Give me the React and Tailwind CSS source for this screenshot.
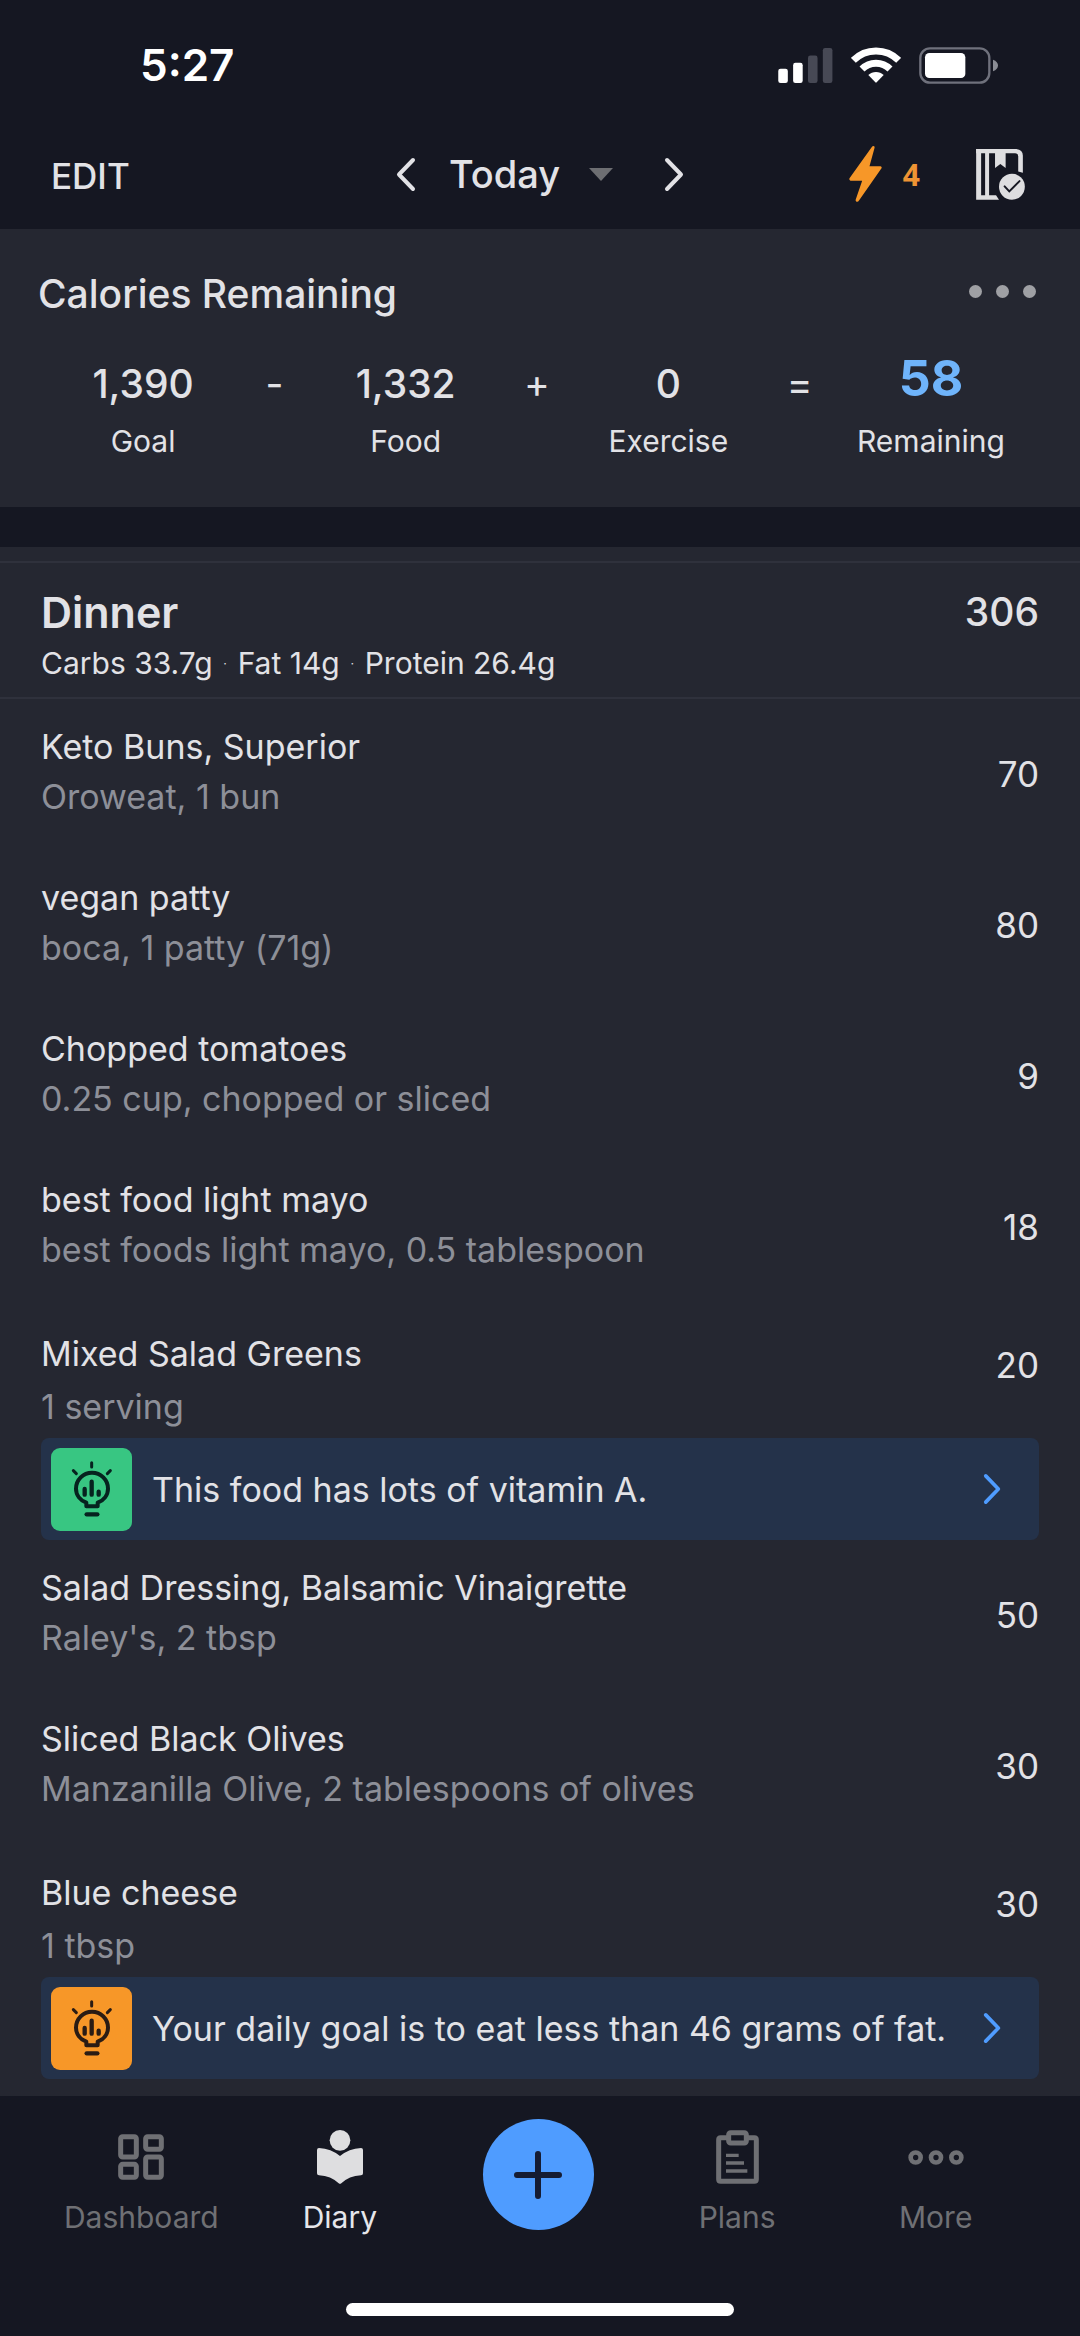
import clsx from 'clsx'

const summary = [
  { value: '1,390', label: 'Goal' },
  { operator: '-' },
  { value: '1,332', label: 'Food' },
  { operator: '+' },
  { value: '0', label: 'Exercise' },
  { operator: '=' },
  { value: '58', label: 'Remaining', highlight: true },
]

const foods = [
  { name: 'Keto Buns, Superior', detail: 'Oroweat, 1 bun', calories: 70 },
  { name: 'vegan patty', detail: 'boca, 1 patty (71g)', calories: 80 },
  { name: 'Chopped tomatoes', detail: '0.25 cup, chopped or sliced', calories: 9 },
  { name: 'best food light mayo', detail: 'best foods light mayo, 0.5 tablespoon', calories: 18 },
  {
    name: 'Mixed Salad Greens',
    detail: '1 serving',
    calories: 20,
    tip: { text: 'This food has lots of vitamin A.', color: 'bg-[#38c682] text-[#06231f]' },
  },
  { name: 'Salad Dressing, Balsamic Vinaigrette', detail: "Raley's, 2 tbsp", calories: 50 },
  { name: 'Sliced Black Olives', detail: 'Manzanilla Olive, 2 tablespoons of olives', calories: 30 },
  {
    name: 'Blue cheese',
    detail: '1 tbsp',
    calories: 30,
    tip: { text: 'Your daily goal is to eat less than 46 grams of fat.', color: 'bg-[#f79728] text-[#2a1c14]' },
  },
]

const SignalIcon = () => (
  <svg viewBox="0 0 165 106" className="w-[55px] h-[35px]">
    <rect x="0" y="63" width="29" height="43" rx="7" fill="#fff" />
    <rect x="45" y="45" width="29" height="61" rx="7" fill="#fff" />
    <rect x="90" y="23" width="29" height="83" rx="7" fill="#474955" />
    <rect x="135" y="0" width="29" height="106" rx="7" fill="#474955" />
  </svg>
)

const WifiIcon = () => (
  <svg viewBox="0 0 150 108" className="w-[50px] h-[36px]">
    <g fill="none" stroke="#fff" strokeWidth="21">
      <path d="M7 40 A96 96 0 0 1 143 40" />
      <path d="M33 66 A59 59 0 0 1 117 66" />
    </g>
    <path d="M52 84 A33 33 0 0 1 98 84 L77 106 Q75 108 73 106Z" fill="#fff" />
  </svg>
)

const BatteryIcon = () => (
  <svg viewBox="0 0 237 111" className="w-[79px] h-[37px]">
    <rect x="4" y="4" width="207" height="103" rx="29" fill="none" stroke="#6f717c" strokeWidth="7" />
    <rect x="18" y="18" width="121" height="75" rx="13" fill="#fff" />
    <path d="M222 38 Q237 44 237 55 Q237 67 222 73Z" fill="#8b8d95" />
  </svg>
)

const ChevronIcon = ({ direction, className }) => (
  <svg viewBox="0 0 21 35" fill="none" stroke="currentColor" strokeWidth="4" strokeLinecap="round" strokeLinejoin="round" className={className}>
    <path d={direction === 'left' ? 'M18 3 L4 17.5 L18 32' : 'M3 3 L17 17.5 L3 32'} />
  </svg>
)

const BoltIcon = () => (
  <svg viewBox="0 0 98 168" className="w-[33px] h-[56px]">
    <path
      d="M68 3 Q71 -1 75 1 Q77 3 76 6 L61 61 H94 Q99 62 97 67 L30 163 Q26 169 22 167 Q18 165 20 160 L39 104 H4 Q-1 103 1 97Z"
      fill="#f79728"
    />
  </svg>
)

const DiaryCheckIcon = () => (
  <svg viewBox="0 0 147 154" className="w-[49px] h-[51px]">
    <path d="M0 0 H121 Q141 2 141 20 V72 L127 68 V22 Q127 13 118 13 H0Z" fill="#dedee0" />
    <path d="M0 0 H15 V140 H60 L69 153 H0Z" fill="#dedee0" />
    <path d="M27 8 H39 V145 H27Z" fill="#dedee0" />
    <path d="M57 8 H89 V57 L73 45 L57 57Z" fill="#dedee0" />
    <circle cx="108" cy="114" r="39" fill="#dedee0" />
    <path d="M86 113 L100 128 L131 97" fill="none" stroke="#151722" strokeWidth="6" strokeLinecap="round" />
  </svg>
)

const BulbIcon = () => (
  <svg viewBox="0 0 126 168" fill="none" stroke="currentColor" strokeLinecap="round" strokeLinejoin="round" className="w-[42px] h-[56px]">
    <path d="M62 5 V18 M7 29 L16 38 M118 29 L109 38" strokeWidth="9" />
    <path d="M46 136 V125 C28 118 15 102 15 83 A48 48 0 0 1 111 83 C111 102 98 118 80 125 V136Z" strokeWidth="12" />
    <path d="M47 160 H79" strokeWidth="13" />
    <path d="M41 84 V101 M62 62 V101 M83 92 V101" strokeWidth="13" />
  </svg>
)

const DashboardIcon = () => (
  <svg viewBox="0 0 138 138" fill="none" stroke="currentColor" strokeWidth="15" className="w-[46px] h-[46px]">
    <rect x="8" y="8" width="47" height="61" rx="6" />
    <rect x="83" y="8" width="47" height="38" rx="6" />
    <rect x="8" y="91" width="47" height="39" rx="6" />
    <rect x="83" y="69" width="47" height="61" rx="6" />
  </svg>
)

const DiaryIcon = () => (
  <svg viewBox="0 0 138 162" fill="#dedee0" className="w-[46px] h-[54px]">
    <circle cx="69" cy="31" r="31" />
    <path d="M6 54 Q42 56 69 78 Q96 56 132 54 Q138 54 138 60 V130 Q138 136 132 136 Q96 138 73 160 Q69 163 65 160 Q42 138 6 136 Q0 136 0 130 V60 Q0 54 6 54Z" />
  </svg>
)

const PlansIcon = () => (
  <svg viewBox="0 0 129 162" fill="none" stroke="currentColor" strokeWidth="15" className="w-[43px] h-[54px]">
    <path d="M36 23 H14 Q8 23 8 29 V148 Q8 154 14 154 H115 Q121 154 121 148 V29 Q121 23 115 23 H93" />
    <rect x="38" y="8" width="53" height="31" rx="6" />
    <path d="M30 76 H68 M30 99 H84 M30 123 H94" strokeWidth="10" />
  </svg>
)

const MoreIcon = () => (
  <svg viewBox="0 0 168 44" fill="none" stroke="currentColor" strokeWidth="14" className="w-[56px] h-[15px]">
    <circle cx="23" cy="22" r="15" />
    <circle cx="84" cy="22" r="15" />
    <circle cx="145" cy="22" r="15" />
  </svg>
)

const StatusBar = () => (
  <div className="h-[130px] flex items-center justify-between pl-[140px] pr-[82px]">
    <span className="text-[44px] leading-[52px] font-semibold text-white">5:27</span>
    <div className="flex items-center gap-[18px]">
      <SignalIcon />
      <WifiIcon />
      <BatteryIcon />
    </div>
  </div>
)

const Header = () => (
  <header className="h-[99px] grid grid-cols-[1fr_auto_1fr] items-start px-[51px]">
    <button className="justify-self-start h-[92px] text-[35px] font-medium">EDIT</button>
    <div className="flex items-center h-[88px]">
      <button aria-label="Previous day">
        <ChevronIcon direction="left" className="w-[21px] h-[35px]" />
      </button>
      <button className="flex items-center ml-[33px] text-[38px] font-medium">
        Today
        <svg viewBox="0 0 24 13" className="w-[24px] h-[13px] ml-[29px]">
          <path d="M0 0 H24 L12 13Z" fill="#6d6e72" />
        </svg>
      </button>
      <button aria-label="Next day" className="ml-[51px]">
        <ChevronIcon direction="right" className="w-[21px] h-[35px]" />
      </button>
    </div>
    <div className="flex items-center justify-self-end h-[88px] pr-1">
      <button className="flex items-center gap-[21px] font-['Noto_Sans',sans-serif] text-[30px] font-bold text-[#ee9434]" aria-label="Streak, 4 days">
        <BoltIcon />4
      </button>
      <button className="ml-[56px]" aria-label="Complete diary">
        <DiaryCheckIcon />
      </button>
    </div>
  </header>
)

const CaloriesCard = () => (
  <section className="h-[278px] bg-[#252731] pt-[38px]">
    <div className="flex items-start justify-between pl-[38px] pr-[44px]">
      <h2 className="text-[39px] leading-[54px] font-medium">Calories Remaining</h2>
      <button aria-label="More options" className="flex gap-[14px] py-[18px]">
        <span className="size-[13px] rounded-full bg-[#9fa0a4]" />
        <span className="size-[13px] rounded-full bg-[#9fa0a4]" />
        <span className="size-[13px] rounded-full bg-[#9fa0a4]" />
      </button>
    </div>
    <div className="grid grid-cols-[4fr_1fr_4fr_1fr_4fr_1fr_4fr] pl-[38px] pr-[44px] pt-[28px] text-center">
      {summary.map((item, i) =>
        item.operator ? (
          <span key={i} className="text-[39px] leading-[70px]">{item.operator}</span>
        ) : (
          <div key={i}>
            <p
              className={clsx(
                item.highlight
                  ? 'text-[50px] leading-[58px] pb-[12px] font-bold text-[#6fb4fb]'
                  : 'text-[39px] leading-[70px] font-medium'
              )}
            >
              {item.value}
            </p>
            <p className="text-[30px] leading-[44px]">{item.label}</p>
          </div>
        )
      )}
    </div>
  </section>
)

const Tip = ({ tip }) => (
  <button className="w-full h-[102px] flex items-center rounded-lg bg-[#24324a] pl-[10px] pr-[37px] text-left">
    <span className={clsx('w-[81px] h-[83px] rounded-[9px] flex items-center justify-center', tip.color)}>
      <BulbIcon />
    </span>
    <span className="flex-1 pl-[20px] text-[34px] whitespace-nowrap">{tip.text}</span>
    <ChevronIcon direction="right" className="w-[19px] h-[32px] text-[#4f9cff]" />
  </button>
)

const FoodRow = ({ food }) => (
  <li className="px-[41px]">
    <div className={clsx('flex justify-between', food.tip ? 'h-[135px] pt-[24px]' : 'h-[151px] items-center')}>
      <div className={clsx('text-[34px]', food.tip ? 'leading-[53px]' : 'leading-[50px] pb-[6px]')}>
        <p>{food.name}</p>
        <p className="text-[#8d8f98]">{food.detail}</p>
      </div>
      <span className={clsx('text-[35px]', food.tip && 'leading-[76px]')}>{food.calories}</span>
    </div>
    {food.tip && <Tip tip={food.tip} />}
  </li>
)

const Meal = () => (
  <section className="mt-[40px] bg-[#252731] pt-[14px] pb-[17px]">
    <div className="h-[138px] flex justify-between border-y-2 border-[#2f313c] px-[41px] pt-[20px]">
      <div>
        <h2 className="text-[43px] leading-[58px] font-semibold">Dinner</h2>
        <p className="text-[30px] leading-[44px]">
          Carbs 33.7g <span className="font-thin">·</span> Fat 14g <span className="font-thin">·</span> Protein 26.4g
        </p>
      </div>
      <span className="text-[39px] leading-[58px] font-medium">306</span>
    </div>
    <ul>
      {foods.map((food) => (
        <FoodRow key={food.name} food={food} />
      ))}
    </ul>
  </section>
)

const NavItem = ({ icon, label, active }) => (
  <a href="#" className={clsx('flex flex-col items-center', active ? 'text-[#e6e6ea]' : 'text-[#6f7074]')}>
    <span className="h-[64px] flex items-center">{icon}</span>
    <span className="mt-[8px] text-[30px] leading-[40px]">{label}</span>
  </a>
)

const BottomNav = () => (
  <nav className="grid grid-cols-5 items-start pl-[42px] pr-[45px] pt-[29px]">
    <NavItem icon={<DashboardIcon />} label="Dashboard" />
    <NavItem icon={<DiaryIcon />} label="Diary" active />
    <button aria-label="Add entry" className="justify-self-center -mt-[6px] size-[111px] rounded-full bg-[#4f9cff] flex items-center justify-center">
      <svg viewBox="0 0 48 48" stroke="#151c33" strokeWidth="6" strokeLinecap="round" className="size-[48px]">
        <path d="M24 3 V45 M3 24 H45" />
      </svg>
    </button>
    <NavItem icon={<PlansIcon />} label="Plans" />
    <NavItem icon={<MoreIcon />} label="More" />
  </nav>
)

const App = () => {
  return (
    <div className="min-h-screen flex flex-col bg-[#151722] text-[#e2e2e6] font-[Inter,'Liberation_Sans',sans-serif]">
      <StatusBar />
      <Header />
      <main>
        <CaloriesCard />
        <Meal />
      </main>
      <BottomNav />
      <div className="mt-auto mb-[20px] self-center w-9/25 h-[13px] rounded-full bg-white" />
    </div>
  )
}

export default App
